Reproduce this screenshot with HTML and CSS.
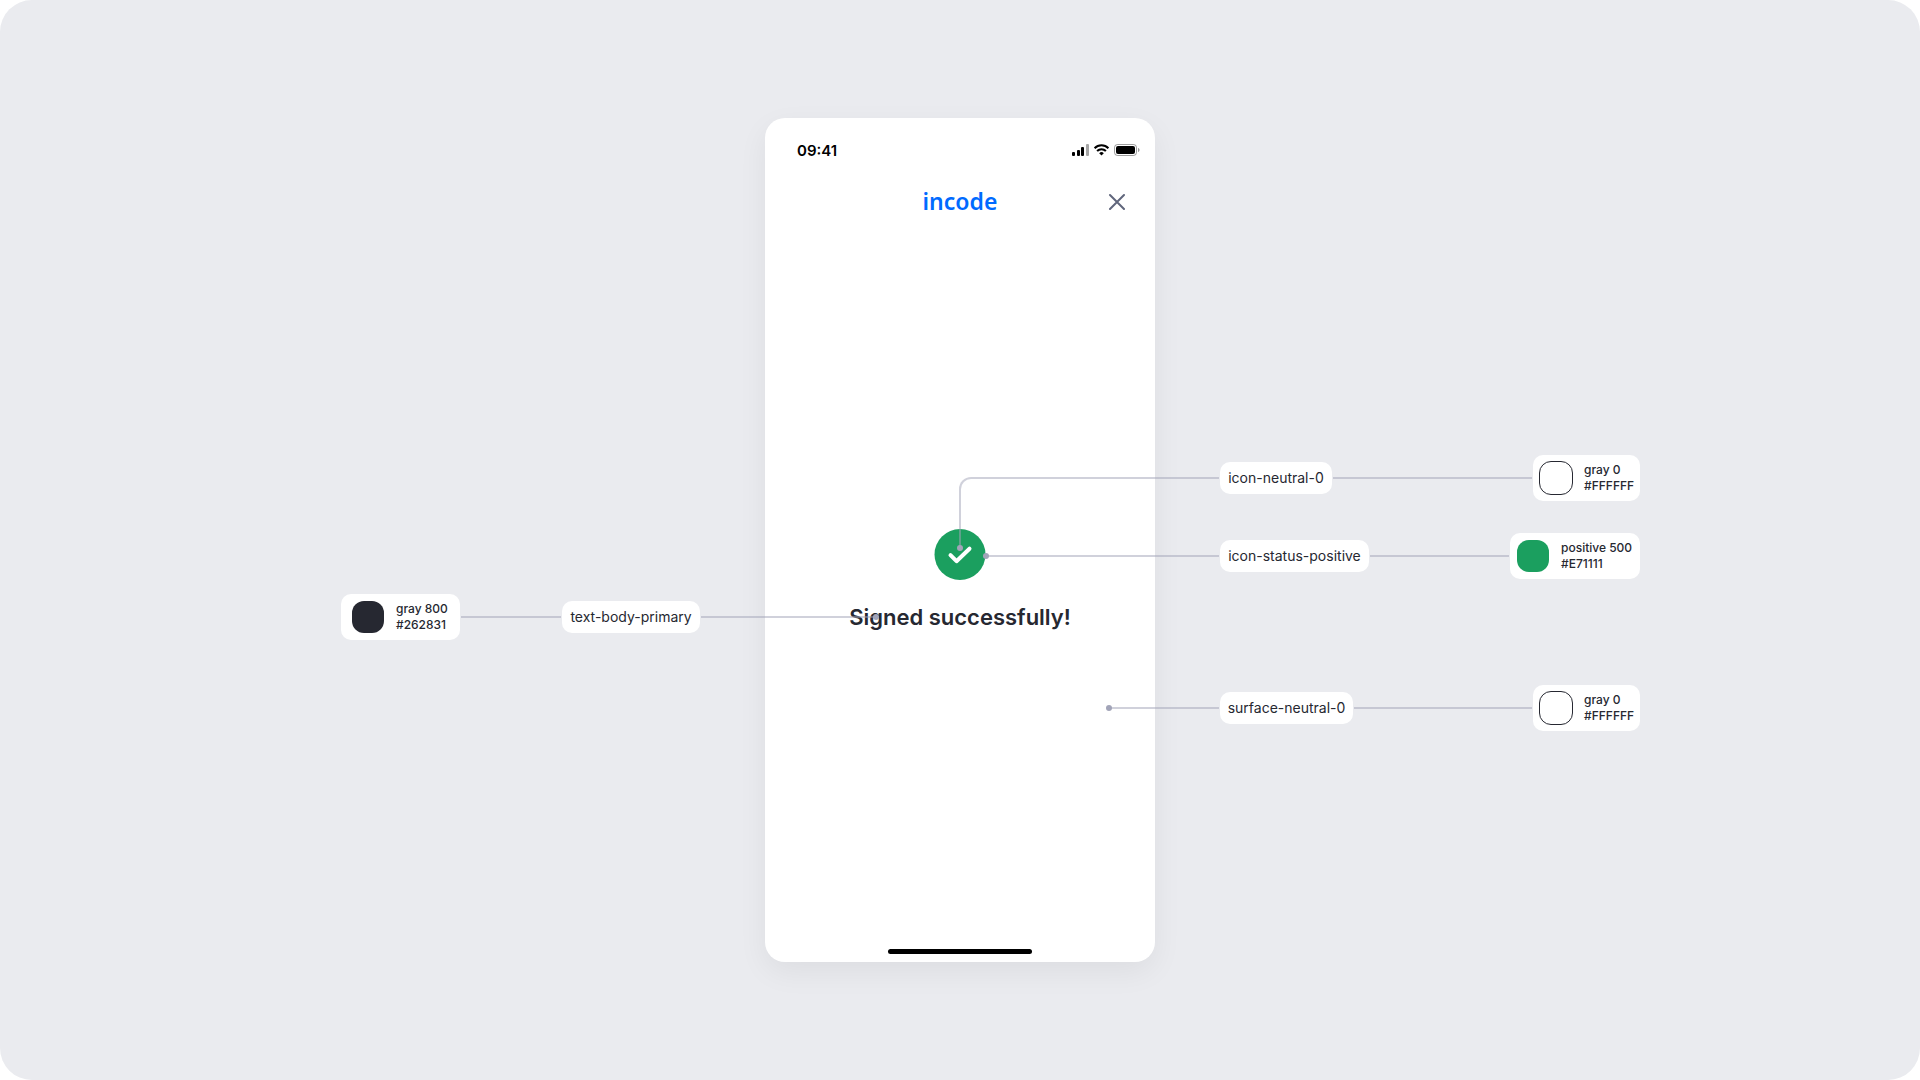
FILE: index.html
```html
<!DOCTYPE html>
<html lang="en">
<head>
<meta charset="utf-8">
<meta name="viewport" content="width=device-width, initial-scale=1">
<title>Signed successfully – color tokens</title>
<link rel="stylesheet" href="styles.css">
</head>
<body>
<div class="canvas">
  <section class="phone">
    <div class="status-bar">
      <span class="time">09:41</span>
      <svg class="status-icons" width="68" height="14" viewBox="0 0 68 14" aria-hidden="true">
        <rect x="0" y="9" width="3" height="4" rx="1"/>
        <rect x="5" y="7" width="3" height="6" rx="1"/>
        <rect x="9" y="4" width="3" height="9" rx="1"/>
        <rect x="14" y="1" width="3" height="12" rx="1" opacity=".35"/>
        <g fill="none" stroke="#000" stroke-width="2">
          <path d="M22.6 5.200a9.700 9.700 0 0 1 13.800 0"/>
          <path d="M25.1 8a6.200 6.200 0 0 1 8.800 0"/>
        </g>
        <path d="M29.5 12.500l-2.300-2.300a3.300 3.300 0 0 1 4.600 0z"/>
        <rect x="42.5" y="1.500" width="22" height="11" rx="3" fill="none" stroke="#000" opacity=".38"/>
        <rect x="44" y="3" width="19" height="8" rx="2"/>
        <path d="M66 5v4c1-.4 1.500-1.100 1.500-2S67 5.400 66 5z" opacity=".4"/>
      </svg>
    </div>
    <header class="app-header">
      <span class="logo">incode</span>
      <button class="close" type="button" aria-label="Close">
        <svg width="18" height="18" viewBox="0 0 18 18" aria-hidden="true"><path d="M2 3l14 14M16 3L2 17" fill="none" stroke="#60667c" stroke-width="2" stroke-linecap="round"/></svg>
      </button>
    </header>
    <main class="result">
      <svg width="52" height="52" viewBox="0 0 52 52" aria-hidden="true">
        <circle cx="26" cy="25.500" r="25.500" fill="#1b9f5f"/>
        <path d="M16.500 26.200l6 6 13-12.500" fill="none" stroke="#fff" stroke-width="4" stroke-linecap="round" stroke-linejoin="round"/>
      </svg>
      <h1 class="title">Signed successfully!</h1>
    </main>
    <div class="home"><div class="home-bar"></div></div>
  </section>

  <div class="note note-icon">
    <div class="elbow"></div>
    <span class="token token-s">icon-neutral-0</span>
    <div class="line"></div>
    <div class="card"><span class="swatch swatch-white"></span><span>gray 0<br>#FFFFFF</span></div>
  </div>
  <div class="note note-status">
    <div class="line stem-status dot-start"></div>
    <span class="token token-l">icon-status-positive</span>
    <div class="line"></div>
    <div class="card card-m"><span class="swatch swatch-green"></span><span>positive 500<br>#E71111</span></div>
  </div>
  <div class="note note-surface">
    <div class="line stem-surface dot-start"></div>
    <span class="token token-m">surface-neutral-0</span>
    <div class="line"></div>
    <div class="card"><span class="swatch swatch-white"></span><span>gray 0<br>#FFFFFF</span></div>
  </div>
  <div class="note note-text">
    <div class="card card-left"><span class="swatch swatch-dark"></span><span>gray 800<br>#262831</span></div>
    <div class="line line-short"></div>
    <span class="token token-t">text-body-primary</span>
    <div class="line dot-end"></div>
  </div>
</div>
</body>
</html>
```
FILE: styles.css
```css
* { box-sizing: border-box; }

body {
  margin: 0;
  background: #fff;
  color: #262831;
  font-family: Inter, "Liberation Sans", sans-serif;
}

.canvas {
  position: relative;
  display: flex;
  align-items: center;
  justify-content: center;
  min-height: 100vh;
  overflow: hidden;
  border-radius: 32px;
  background: #eaebef;
}

/* Phone */
.phone {
  display: flex;
  flex-direction: column;
  width: 390px;
  min-height: 844px;
  border-radius: 20px;
  background: #fff;
  box-shadow: 0 10px 30px rgba(0, 0, 0, .06);
}

.status-bar {
  display: flex;
  align-items: center;
  justify-content: space-between;
  height: 64px;
  padding: 0 15px 0 32px;
}

.time {
  color: #000;
  font-size: 15px;
  font-weight: 600;
}

.app-header {
  display: grid;
  grid-template-columns: 1fr auto 1fr;
  align-items: center;
  height: 38px;
  padding: 0 29px;
}

.logo {
  grid-column: 2;
  color: #006aff;
  font-family: "Noto Sans", sans-serif;
  font-size: 23px;
  font-weight: 600;
  line-height: 32px;
}

.close {
  display: flex;
  justify-self: end;
  padding: 0;
  border: 0;
  background: none;
}

.result {
  display: flex;
  flex: 1;
  flex-direction: column;
  align-items: center;
  justify-content: center;
  gap: 20px;
}

.title {
  margin: 0;
  font-size: 22px;
  font-weight: 600;
  line-height: 32px;
}

.home {
  height: 20px;
  padding-top: 7px;
}

.home-bar {
  width: 144px;
  height: 5px;
  margin: 0 auto;
  border-radius: 3px;
  background: #000;
}

/* Annotations, anchored to the canvas centre */
.note {
  position: absolute;
  display: flex;
  align-items: center;
  gap: 1px;
  height: 46px;
}

.note-icon { top: calc(50% - 85px); left: calc(50% - 1px); width: 681px; }
.note-status { top: calc(50% - 7px); left: calc(50% + 26px); width: 654px; }
.note-surface { top: calc(50% + 145px); left: calc(50% + 149px); width: 531px; }
.note-text { top: calc(50% + 54px); left: calc(50% - 619px); width: 536px; }

.line {
  position: relative;
  flex: 1;
  height: 2px;
  background: rgba(162, 164, 184, .5);
}

.stem-status { flex: 0 0 233px; }
.stem-surface { flex: 0 0 110px; }
.line-short { flex: 0 0 100px; }

.elbow {
  position: relative;
  align-self: flex-start;
  width: 260px;
  height: 71px;
  margin-top: 22px;
  border: solid rgba(162, 164, 184, .5);
  border-width: 2px 0 0 2px;
  border-top-left-radius: 12px;
}

.dot-start::before,
.dot-end::before,
.elbow::before {
  content: "";
  position: absolute;
  width: 6px;
  height: 6px;
  border-radius: 50%;
  background: #a2a4b8;
}

.dot-start::before { top: -2px; left: -3px; }
.dot-end::before { top: -2px; right: -2px; }
.elbow::before { bottom: -3px; left: -4px; }

.token {
  flex: none;
  height: 32px;
  border-radius: 10px;
  background: #fff;
  font-size: 14px;
  line-height: 32px;
  text-align: center;
  white-space: nowrap;
}

.token-s { width: 112px; }
.token-m { width: 133px; }
.token-t { width: 138px; }
.token-l { width: 149px; }

.card {
  display: flex;
  flex: none;
  align-items: center;
  gap: 11px;
  width: 107px;
  height: 46px;
  padding: 0 6px;
  border-radius: 10px;
  background: #fff;
  font-size: 12px;
  font-weight: 500;
  line-height: 16px;
  white-space: nowrap;
}

.card-m { gap: 12px; width: 130px; padding: 0 7px; }
.card-left { gap: 12px; width: 119px; padding: 0 11px; }

.swatch {
  flex: none;
  width: 32px;
  height: 32px;
  border-radius: 12px;
}

.swatch-white { width: 34px; height: 34px; border: 1px solid #262831; }
.swatch-green { background: #1b9f5f; }
.swatch-dark { background: #262831; }
```
